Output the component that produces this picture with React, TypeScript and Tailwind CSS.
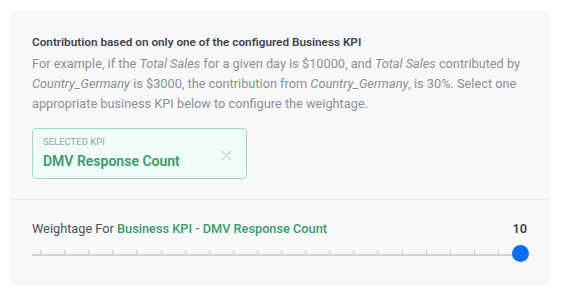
import { X } from 'lucide-react';

const ticks = Array.from({ length: 20 }, (_, i) => i);

export default function App() {
  return (
    <div className="w-[569px] h-[295px] bg-white pt-3 pl-[11px] font-['Roboto',sans-serif]">
      <div className="w-[538px] rounded-md border border-[#f0f0f0] bg-[#f8f8f8] shadow-[0_1px_3px_rgba(0,0,0,0.06)]">
        {/* KPI section */}
        <div className="px-5 pt-[19px] pb-[20px] border-b border-[#ebebeb]">
          <h3 className="text-[11.75px] font-semibold text-[#3e4550] leading-5">
            Contribution based on only one of the configured Business KPI
          </h3>
          <p className="mt-[2px] text-[12.75px] leading-5 text-[#8b9097]">
            For example, if the <i>Total Sales</i> for a given day is $10000, and <i>Total Sales</i> contributed by{' '}
            <i>Country_Germany</i> is $3000, the contribution from <i>Country_Germany</i>, is 30%. Select one
            appropriate business KPI below to configure the weightage.
          </p>

          <div className="mt-[14px] w-[215px] h-[51px] rounded border border-[#9fd9bd] bg-[#effcf7] flex items-center justify-between pl-[10px] pr-[11px]">
            <div className="flex flex-col">
              <span className="text-[9.5px] uppercase text-[#9a9fa5] leading-3">Selected KPI</span>
              <span className="text-[14px] font-semibold text-[#3a9a6c] leading-5 mt-[3px]">DMV Response Count</span>
            </div>
            <X size={17} strokeWidth={1.3} className="text-[#b5b9bd] mt-1" />
          </div>
        </div>

        {/* Weightage slider */}
        <div className="px-5 pt-[19px] pb-[20px]">
          <div className="flex items-center justify-between text-[12.75px] leading-5">
            <span className="text-[#4b515a]">
              Weightage For <span className="text-[#3a9a6c] font-medium">Business KPI - DMV Response Count</span>
            </span>
            <span className="font-semibold text-[#3e4550] pr-[1px]">10</span>
          </div>
          <div className="relative mt-[7px] h-4">
            <div className="absolute left-0 right-[8px] top-[8px] h-[2px] bg-[#cfd4d8]" />
            {ticks.map((i) => (
              <div
                key={i}
                className="absolute top-[4px] w-px h-[6px] bg-[#c6cbcf]"
                style={{ left: 8 + i * 24.1 }}
              />
            ))}
            <div className="absolute right-[-1px] top-0 w-[17px] h-[17px] -mt-px rounded-full bg-[#0b6cf4]" />
          </div>
        </div>
      </div>
    </div>
  );
}
